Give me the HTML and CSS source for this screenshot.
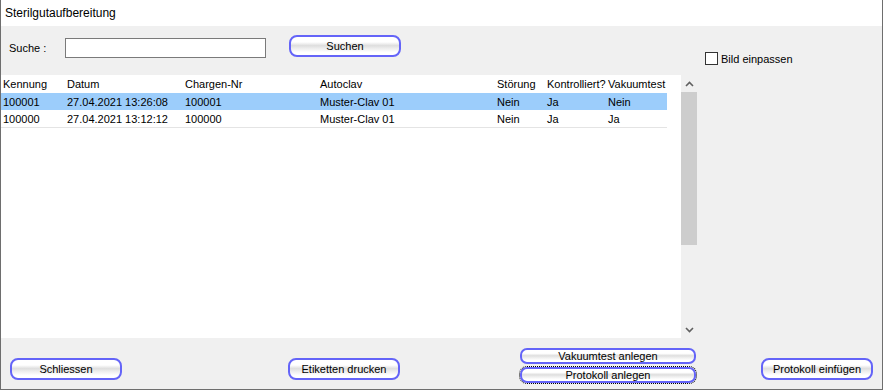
FILE: index.html
```html
<!DOCTYPE html>
<html lang="de">
<head>
    <meta charset="UTF-8">
    <title>Sterilgutaufbereitung</title>
    <link rel="stylesheet" href="styles.css">
</head>
<body>
<div class="window">
    <div class="titlebar">Sterilgutaufbereitung</div>

    <div class="content">
        <div class="main">
            <div class="left">
                <!-- Suche -->
                <div class="search-row">
                    <label class="search-label">Suche :</label>
                    <input type="text" class="search-input">
                    <button class="btn btn-search">Suchen</button>
                </div>

                <!-- Liste -->
                <div class="grid">
                    <div class="grid-body">
                        <table class="list">
                            <colgroup>
                                <col style="width:64px">
                                <col style="width:118px">
                                <col style="width:135px">
                                <col style="width:177px">
                                <col style="width:50px">
                                <col style="width:61px">
                                <col style="width:61px">
                            </colgroup>
                            <thead>
                                <tr>
                                    <th>Kennung</th>
                                    <th>Datum</th>
                                    <th>Chargen-Nr</th>
                                    <th>Autoclav</th>
                                    <th>Störung</th>
                                    <th>Kontrolliert?</th>
                                    <th>Vakuumtest</th>
                                </tr>
                            </thead>
                            <tbody>
                                <tr class="selected">
                                    <td>100001</td>
                                    <td>27.04.2021 13:26:08</td>
                                    <td>100001</td>
                                    <td>Muster-Clav 01</td>
                                    <td>Nein</td>
                                    <td>Ja</td>
                                    <td>Nein</td>
                                </tr>
                                <tr class="last">
                                    <td>100000</td>
                                    <td>27.04.2021 13:12:12</td>
                                    <td>100000</td>
                                    <td>Muster-Clav 01</td>
                                    <td>Nein</td>
                                    <td>Ja</td>
                                    <td>Ja</td>
                                </tr>
                            </tbody>
                        </table>
                    </div>
                    <div class="scrollbar">
                        <div class="arrow">
                            <svg width="9" height="6" viewBox="0 0 9 6"><path d="M1 5 L4.5 1.5 L8 5" fill="none" stroke="#606060" stroke-width="1.6"/></svg>
                        </div>
                        <div class="track">
                            <div class="thumb"></div>
                        </div>
                        <div class="arrow">
                            <svg width="9" height="6" viewBox="0 0 9 6"><path d="M1 1 L4.5 4.5 L8 1" fill="none" stroke="#606060" stroke-width="1.6"/></svg>
                        </div>
                    </div>
                </div>
            </div>

            <div class="right">
                <label class="check">
                    <span class="box"></span>
                    Bild einpassen
                </label>
            </div>
        </div>

        <!-- Buttons unten -->
        <div class="bottom-bar">
            <button class="btn btn-close">Schliessen</button>
            <button class="btn btn-print">Etiketten drucken</button>
            <div class="btn-stack">
                <button class="btn btn-small">Vakuumtest anlegen</button>
                <button class="btn btn-small focused">Protokoll anlegen</button>
            </div>
            <button class="btn btn-insert">Protokoll einfügen</button>
        </div>
    </div>
</div>
</body>
</html>
```

FILE: styles.css
```css
body {
    margin: 0;
    font-family: "Liberation Sans", Arial, sans-serif;
    font-size: 11px;
    color: #000;
    background: #f0f0f0;
}
.window {
    width: 883px;
    height: 390px;
    box-sizing: border-box;
    border-left: 1px solid #6e6e6e;
    border-right: 1px solid #6e6e6e;
    border-bottom: 1px solid #6e6e6e;
    display: flex;
    flex-direction: column;
    background: #f0f0f0;
}
.titlebar {
    height: 26px;
    line-height: 26px;
    background: #fff;
    padding-left: 4px;
    font-size: 12px;
}
.content {
    flex: 1;
    display: flex;
    flex-direction: column;
}
.main {
    display: flex;
}
.left {
    width: 696px;
}
.search-row {
    display: flex;
    align-items: center;
    height: 22px;
    margin-top: 10px;
}
.search-label {
    width: 56px;
    padding-left: 8px;
    margin-top: 1px;
}
.search-input {
    width: 201px;
    height: 20px;
    box-sizing: border-box;
    border: 1px solid #7a7a7a;
    background: #fff;
    margin: 2px 0 0 0;
    padding: 0 3px;
    font-family: inherit;
    font-size: 11px;
}
.btn {
    font-family: inherit;
    font-size: 11px;
    color: #000;
    border: 2px solid #6464f8;
    border-radius: 8px;
    background: linear-gradient(#ffffff 0%, #ffffff 28%, #dedede 48%, #ececec 62%, #ffffff 85%, #ffffff 100%);
    padding: 0;
    box-sizing: border-box;
    height: 22px;
    width: 112px;
    cursor: pointer;
}
.btn-search {
    margin-left: 23px;
    margin-top: -2px;
}
.grid {
    display: flex;
    margin-top: 17px;
    height: 263px;
}
.grid-body {
    width: 680px;
    background: #fff;
}
.list {
    border-collapse: collapse;
    table-layout: fixed;
    width: 666px;
}
.list th,
.list td {
    text-align: left;
    font-weight: normal;
    padding: 0 0 0 2px;
    white-space: nowrap;
    overflow: hidden;
}
.list th {
    height: 18px;
}
.list td {
    height: 17px;
}
.list tr.selected td {
    background: #9ccdfb;
}
.list tr.last td {
    border-bottom: 1px solid #e4e4e4;
}
.scrollbar {
    width: 16px;
    background: #f0f0f0;
    display: flex;
    flex-direction: column;
}
.arrow {
    height: 17px;
    display: flex;
    align-items: center;
    justify-content: center;
}
.track {
    flex: 1;
}
.thumb {
    height: 153px;
    background: #cdcdcd;
}
.right {
    padding-top: 26px;
    padding-left: 8px;
}
.check {
    display: flex;
    align-items: center;
    gap: 3px;
}
.box {
    width: 11px;
    height: 11px;
    border: 1px solid #333;
    background: #fff;
}
.bottom-bar {
    display: flex;
    align-items: flex-start;
}
.bottom-bar > .btn {
    margin-top: 20px;
}
.btn-close {
    margin-left: 9px;
}
.btn-print {
    margin-left: 166px;
}
.btn-stack {
    margin-top: 10px;
    margin-left: 120px;
    display: flex;
    flex-direction: column;
    gap: 3px;
}
.btn-small {
    width: 176px;
    height: 16px;
    border-radius: 7px;
    line-height: 12px;
}
.focused {
    outline: 1px dotted #000;
    outline-offset: 0;
}
.btn-insert {
    margin-left: 65px;
}
```
